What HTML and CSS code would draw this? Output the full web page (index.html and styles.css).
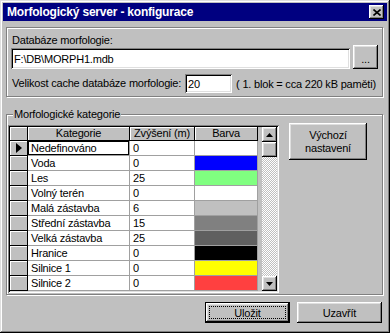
FILE: index.html
```html
<!DOCTYPE html>
<html lang="cs">
<head>
  <meta charset="UTF-8">
  <title>Morfologický server - konfigurace</title>
  <link rel="stylesheet" href="styles.css">
</head>
<body>
  <div class="window">
    <div class="titlebar">
      <span class="title">Morfologický server - konfigurace</span>
      <div class="close-btn">
        <svg width="8" height="7" viewBox="0 0 8 7">
          <path d="M0.5 0.5L7.5 6.5M7.5 0.5L0.5 6.5" stroke="#000" stroke-width="1.6" fill="none"/>
        </svg>
      </div>
    </div>

    <div class="content">
      <div class="frame frame-db">
        <div class="db-row">
          <div class="db-field">
            <div class="label">Databáze morfologie:</div>
            <div class="edit edit-path">F:\DB\MORPH1.mdb</div>
          </div>
          <div class="btn btn-browse">...</div>
        </div>
        <div class="cache-row">
          <span class="label">Velikost cache databáze morfologie:</span>
          <div class="edit edit-cache">20</div>
          <span class="note">( 1. blok = cca 220 kB paměti)</span>
        </div>
      </div>

      <div class="frame frame-cat">
        <span class="legend">Morfologické kategorie</span>
        <div class="grid">
          <div class="grid-cells">
            <div class="cell fixed"></div>
            <div class="cell fixed head">Kategorie</div>
            <div class="cell fixed head">Zvýšení (m)</div>
            <div class="cell fixed head">Barva</div>

            <div class="cell fixed indicator">
              <svg width="6" height="10" viewBox="0 0 6 10"><polygon points="0,0 6,5 0,10" fill="#000"/></svg>
            </div>
            <div class="cell focused">Nedefinováno</div>
            <div class="cell">0</div>
            <div class="cell swatch swatch-white"></div>

            <div class="cell fixed"></div>
            <div class="cell">Voda</div>
            <div class="cell">0</div>
            <div class="cell swatch swatch-blue"></div>

            <div class="cell fixed"></div>
            <div class="cell">Les</div>
            <div class="cell">25</div>
            <div class="cell swatch swatch-green"></div>

            <div class="cell fixed"></div>
            <div class="cell">Volný terén</div>
            <div class="cell">0</div>
            <div class="cell swatch swatch-white"></div>

            <div class="cell fixed"></div>
            <div class="cell">Malá zástavba</div>
            <div class="cell">6</div>
            <div class="cell swatch swatch-silver"></div>

            <div class="cell fixed"></div>
            <div class="cell">Střední zástavba</div>
            <div class="cell">15</div>
            <div class="cell swatch swatch-grey"></div>

            <div class="cell fixed"></div>
            <div class="cell">Velká zástavba</div>
            <div class="cell">25</div>
            <div class="cell swatch swatch-dark"></div>

            <div class="cell fixed"></div>
            <div class="cell">Hranice</div>
            <div class="cell">0</div>
            <div class="cell swatch swatch-black"></div>

            <div class="cell fixed"></div>
            <div class="cell">Silnice 1</div>
            <div class="cell">0</div>
            <div class="cell swatch swatch-yellow"></div>

            <div class="cell fixed"></div>
            <div class="cell">Silnice 2</div>
            <div class="cell">0</div>
            <div class="cell swatch swatch-red"></div>
          </div>
          <div class="grid-gap"></div>
          <div class="scrollbar">
            <div class="btn scroll-btn">
              <svg width="7" height="4" viewBox="0 0 7 4"><polygon points="0,4 7,4 3.5,0" fill="#000"/></svg>
            </div>
            <div class="btn scroll-thumb"></div>
            <div class="scroll-track"></div>
            <div class="btn scroll-btn">
              <svg width="7" height="4" viewBox="0 0 7 4"><polygon points="0,0 7,0 3.5,4" fill="#000"/></svg>
            </div>
          </div>
        </div>
        <div class="btn btn-defaults">Výchozí<br>nastavení</div>
      </div>

      <div class="actions">
        <div class="btn btn-action btn-primary"><span>Uložit</span></div>
        <div class="btn btn-action">Uzavřít</div>
      </div>
    </div>
  </div>
</body>
</html>
```

FILE: styles.css
```css
body {
  margin: 0;
  font-family: "Liberation Sans", Arial, sans-serif;
  font-size: 11px;
  letter-spacing: -0.2px;
  color: #000;
  background-color: #c0c0c0;
}

.window {
  width: 390px;
  height: 333px;
  box-sizing: border-box;
  padding: 3px;
  display: flex;
  flex-direction: column;
  background-color: #c0c0c0;
  box-shadow: inset -1px -1px #000, inset 1px 1px #dfdfdf, inset -2px -2px #808080, inset 2px 2px #fff;
}

.titlebar {
  height: 18px;
  display: flex;
  align-items: center;
  justify-content: space-between;
  padding: 0 3px 0 4px;
  background-color: #000080;
  color: #fff;
}

.title {
  font-size: 12px;
  font-weight: bold;
  letter-spacing: -0.2px;
}

.close-btn {
  width: 15px;
  height: 14px;
  display: flex;
  align-items: center;
  justify-content: center;
  background-color: #c0c0c0;
  box-shadow: inset -1px -1px #000, inset 1px 1px #fff, inset -2px -2px #808080, inset 2px 2px #dfdfdf;
}

.content {
  flex: 1;
  display: flex;
  flex-direction: column;
  padding: 6px 3px 0;
}

/* etched group frame */
.frame {
  position: relative;
  margin-right: 1px;
  border: 1px solid #808080;
  box-shadow: inset 1px 1px #fff, 1px 1px #fff;
}

.label {
  line-height: 13px;
  white-space: nowrap;
}

/* sunken edit box */
.edit {
  box-sizing: border-box;
  background-color: #fff;
  display: flex;
  align-items: center;
  box-shadow: inset 1px 1px #808080, inset -1px -1px #fff, inset 2px 2px #000, inset -2px -2px #dfdfdf;
}

/* raised button */
.btn {
  box-sizing: border-box;
  background-color: #c0c0c0;
  display: flex;
  align-items: center;
  justify-content: center;
  text-align: center;
  box-shadow: inset -1px -1px #000, inset 1px 1px #fff, inset -2px -2px #808080, inset 2px 2px #dfdfdf;
}

.frame-db {
  padding: 6px 4px 3px 4px;
}

.db-row {
  display: flex;
  align-items: flex-end;
}

.db-field {
  flex: 1;
  padding-left: 1px;
}

.db-field .edit {
  margin-left: -1px;
}

.edit-path {
  height: 21px;
  margin-top: 1px;
  padding-left: 3px;
}

.btn-browse {
  width: 25px;
  height: 24px;
  margin-left: 3px;
  padding-top: 3px;
}

.cache-row {
  display: flex;
  align-items: center;
  margin-top: 5px;
  padding-left: 1px;
}

.edit-cache {
  width: 47px;
  height: 19px;
  margin-left: 4px;
  padding-left: 3px;
}

.note {
  margin-left: 4px;
  white-space: nowrap;
}

.frame-cat {
  margin-top: 17px;
  display: flex;
  align-items: flex-start;
  padding: 10px 0 1px 1px;
}

.legend {
  position: absolute;
  top: -7px;
  left: 6px;
  padding: 0 1px;
  line-height: 13px;
  background-color: #c0c0c0;
}

.grid {
  width: 271px;
  height: 168px;
  box-sizing: border-box;
  padding: 2px;
  display: flex;
  box-shadow: inset 1px 1px #808080, inset -1px -1px #fff, inset 2px 2px #000, inset -2px -2px #dfdfdf;
}

.grid-cells {
  display: grid;
  grid-template-columns: 18px 102px 65px 63px;
  grid-template-rows: 14px repeat(10, 15px);
}

.cell {
  box-sizing: border-box;
  padding-left: 3px;
  line-height: 14px;
  white-space: nowrap;
  overflow: hidden;
  background-color: #fff;
  border-right: 1px solid #a0a0a0;
  border-bottom: 1px solid #a0a0a0;
}

.cell.fixed {
  padding-left: 0;
  background-color: #c0c0c0;
  border-color: #000;
  box-shadow: inset 1px 1px #fff;
}

.cell.head {
  text-align: center;
  line-height: 13px;
}

.cell.indicator {
  display: flex;
  align-items: center;
  justify-content: center;
}

.cell.focused {
  box-shadow: inset 0 0 0 1px #000;
}

.swatch-white { background-color: #fff; }
.swatch-blue { background-color: #0000ff; }
.swatch-green { background-color: #80ff80; }
.swatch-silver { background-color: #c0c0c0; }
.swatch-grey { background-color: #808080; }
.swatch-dark { background-color: #606060; }
.swatch-black { background-color: #000; }
.swatch-yellow { background-color: #ffff00; }
.swatch-red { background-color: #ff4040; }

.grid-gap {
  width: 4px;
  background-color: #c0c0c0;
}

.scrollbar {
  width: 15px;
  display: flex;
  flex-direction: column;
}

.scroll-btn,
.scroll-thumb {
  height: 15px;
  flex-shrink: 0;
}

.scroll-track {
  flex: 1;
  background: repeating-conic-gradient(#fff 0 25%, #c0c0c0 0 50%) 0 0 / 2px 2px;
}

.btn-defaults {
  width: 78px;
  height: 37px;
  margin: -2px 0 0 10px;
  line-height: 13px;
}

.actions {
  display: flex;
  justify-content: flex-end;
  gap: 7px;
  margin-top: 7px;
  padding-right: 2px;
}

.btn-action {
  width: 85px;
  height: 21px;
}

.btn-primary {
  position: relative;
  border: 1px solid #000;
}

.btn-primary::after {
  content: "";
  position: absolute;
  inset: 3px;
  border: 1px dotted #000;
}
```
